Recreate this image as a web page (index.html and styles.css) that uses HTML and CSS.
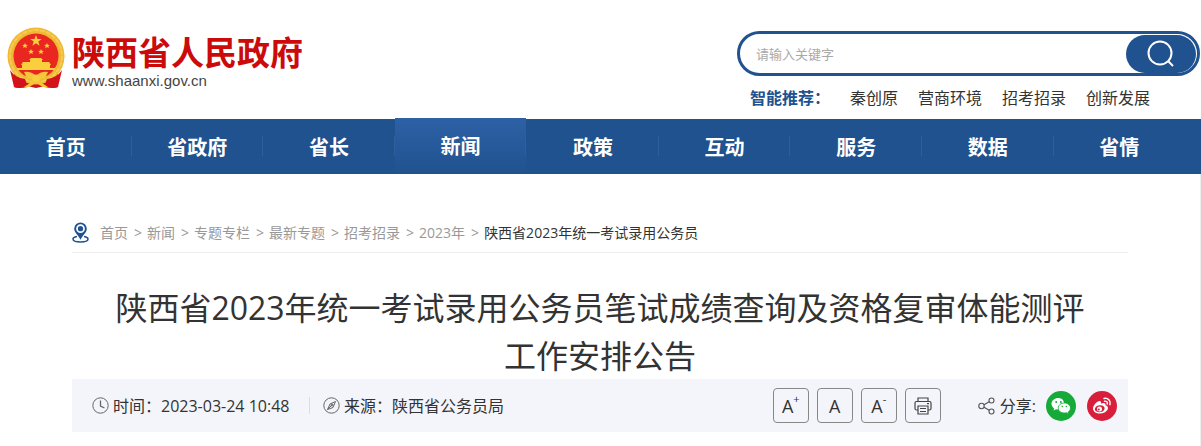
FILE: index.html
```html
<!DOCTYPE html>
<html lang="zh-CN">
<head>
    <meta charset="UTF-8">
    <meta name="viewport" content="width=device-width, initial-scale=1.0">
    <title>陕西省人民政府</title>
    <link rel="stylesheet" href="styles.css">
</head>
<body>
    <header class="header">
        <a class="logo" href="#">
            <svg class="emblem" viewBox="0 0 58 62" aria-hidden="true">
                <path d="M7 42 L7 60 Q15 62 20 59 L29 61 L38 59 Q44 62 51 60 L51 42z" fill="#d3121a"/>
                <circle cx="29" cy="29" r="28.500" fill="#efb935"/>
                <circle cx="29" cy="29" r="26" fill="none" stroke="#f6cb50" stroke-width="2" stroke-dasharray="5 1"/>
                <circle cx="29" cy="29" r="22.500" fill="#e92720"/>
                <path d="M29 8l1.500 4h4.200l-3.400 2.600 1.300 4.200-3.600-2.600-3.600 2.600 1.300-4.200-3.400-2.600h4.200z" fill="#f9cf3e"/>
                <g fill="#f9cf3e">
                    <path id="star" d="M18 16l.8 1.800 2 .1-1.500 1.300.5 2-1.800-1.100-1.800 1.100.5-2-1.500-1.300 2-.1z"/>
                    <use href="#star" x="22"/>
                    <use href="#star" x="6" y="6"/>
                    <use href="#star" x="16" y="6"/>
                </g>
                <path d="M22 33l2-2h10l2 2h-1v2h7l2 3h-1v3h5v2H10v-2h5v-3h-1l2-3h7v-2z" fill="#f9cf3e"/>
                <path d="M3 43 Q8 51 18 52 L21 60 Q10 62 7 60z M55 43 Q50 51 40 52 L37 60 Q48 62 51 60z" fill="#d3121a"/>
                <path d="M17 45 Q24 44 29 49 Q34 44 41 45 L38 51 L34 52 L32 54 L41 60 H36 L29 56 L22 60 H17 L26 54 L24 52 L20 51z" fill="#f5c63a"/>
                <circle cx="29" cy="51" r="3.500" fill="#f9cf3e"/>
            </svg>
            <span class="logo-text">
                <strong>陕西省人民政府</strong>
                <span>www.shaanxi.gov.cn</span>
            </span>
        </a>
        <div class="search">
            <form class="search-box">
                <input type="text" placeholder="请输入关键字" aria-label="请输入关键字">
                <button type="button" aria-label="搜索">
                    <svg width="28" height="28" viewBox="0 0 28 28" fill="none" stroke="#fff" stroke-width="2">
                        <circle cx="13" cy="13" r="11.500"/>
                        <path d="M21 21l5 5"/>
                    </svg>
                </button>
            </form>
            <div class="recommend">
                <strong>智能推荐：</strong>
                <a href="#">秦创原</a>
                <a href="#">营商环境</a>
                <a href="#">招考招录</a>
                <a href="#">创新发展</a>
            </div>
        </div>
    </header>

    <nav class="nav">
        <a href="#">首页</a>
        <a href="#">省政府</a>
        <a href="#">省长</a>
        <a href="#" class="active">新闻</a>
        <a href="#">政策</a>
        <a href="#">互动</a>
        <a href="#">服务</a>
        <a href="#">数据</a>
        <a href="#">省情</a>
    </nav>

    <main class="main">
        <div class="breadcrumb">
            <svg width="17" height="21" viewBox="0 0 17 21" aria-hidden="true">
                <path d="M5 14.500C2 15 1 16 1 17c0 2 3.500 3 7.500 3s7.500-1 7.500-3c0-1-1-2-4-2.500" fill="none" stroke="#20528f" stroke-width="1.500"/>
                <path d="M8.500 0.500a6.300 6.300 0 0 0-6.300 6.300c0 4 4.300 6.500 6.300 11 2-4.500 6.300-7 6.300-11a6.300 6.300 0 0 0-6.300-6.300z" fill="#20528f"/>
                <circle cx="8.500" cy="6.700" r="3.500" fill="none" stroke="#fff" stroke-width="1.700"/>
            </svg>
            <a href="#">首页</a><span>&gt;</span>
            <a href="#">新闻</a><span>&gt;</span>
            <a href="#">专题专栏</a><span>&gt;</span>
            <a href="#">最新专题</a><span>&gt;</span>
            <a href="#">招考招录</a><span>&gt;</span>
            <a href="#">2023年</a><span>&gt;</span>
            <a href="#" class="current">陕西省2023年统一考试录用公务员</a>
        </div>

        <h1>陕西省2023年统一考试录用公务员笔试成绩查询及资格复审体能测评工作安排公告</h1>

        <div class="info">
            <div class="info-item time">
                <svg width="17" height="17" viewBox="0 0 17 17" fill="none" stroke="#666">
                    <circle cx="8.500" cy="8.500" r="7.700"/>
                    <path d="M8.500 3.500v5.500l4 2" stroke-width="1.300"/>
                </svg>
                <span>时间：</span><time>2023-03-24 10:48</time>
            </div>
            <div class="info-item source">
                <svg width="17" height="17" viewBox="0 0 17 17" fill="none" stroke="#666">
                    <circle cx="8.500" cy="8.500" r="7.700"/>
                    <path d="M12.500 4.500l-2.500 6-5.500 2 2.500-5.500zM4.500 12.500l5-5"/>
                    <circle cx="9" cy="8" r="1"/>
                </svg>
                <span>来源：陕西省公务员局</span>
            </div>
            <div class="tools">
                <button type="button">A<sup>+</sup></button>
                <button type="button">A</button>
                <button type="button">A<sup>-</sup></button>
                <button type="button" aria-label="打印">
                    <svg width="18" height="18" viewBox="0 0 18 18" fill="none" stroke="#444" stroke-width="1.200">
                        <path d="M4 4.500V1h10v3.500M4 13H2.500Q1 13 1 11.500V6q0-1.500 1.500-1.500h13Q17 4.500 17 6v5.500q0 1.500-1.500 1.500H14M4 9h10v8H4zM6 11.500h6M6 14.500h6M13 6.700h2"/>
                    </svg>
                </button>
            </div>
            <div class="share">
                <svg width="17" height="18" viewBox="0 0 17 18" fill="none" stroke="#555" stroke-width="1.100">
                    <circle cx="3.500" cy="9" r="2.700"/>
                    <circle cx="13.500" cy="3.500" r="2.500"/>
                    <circle cx="13.500" cy="14.500" r="2.500"/>
                    <path d="M6 7.800l5.200-3M6 10.200l5.200 3"/>
                </svg>
                <span>分享:</span>
                <a href="#" class="wechat" aria-label="微信">
                    <svg width="20" height="18" viewBox="0 0 20 18">
                        <path d="M7.500 1C3.500 1 .5 3.500.5 6.800c0 1.900 1 3.500 2.700 4.600l-.7 2.200 2.600-1.300c1 .3 1.900.3 2.900.3C15 12.500 15 1 7.500 1z" fill="#fff"/>
                        <path d="M13.300 6C9.800 6 7.200 8.200 7.200 11s2.600 5 6.100 5c.8 0 1.500-.1 2.200-.3l2.200 1.200-.6-1.900c1.500-1 2.400-2.400 2.400-4 0-2.800-2.700-5-6.200-5z" fill="#fff" stroke="#16ab39" stroke-width=".8"/>
                        <g fill="#16ab39"><circle cx="5.200" cy="5" r="1"/><circle cx="9.800" cy="5" r="1"/><circle cx="11.300" cy="9.500" r=".8"/><circle cx="15.300" cy="9.500" r=".8"/></g>
                    </svg>
                </a>
                <a href="#" class="weibo" aria-label="微博">
                    <svg width="20" height="18" viewBox="0 0 20 18">
                        <path d="M1 11.500C1 8 6 3.200 8.300 4.200c1 .4.800 1.600.5 2.400 2.700-1.100 5.200-1 4.700 1.600 5.400 1.600 1.500 8.300-5.500 8.300-4 0-7-2-7-5z" fill="#fff"/>
                        <ellipse cx="7.800" cy="11.700" rx="4.900" ry="3.400" fill="#d81e3a" transform="rotate(-8 8 12)"/>
                        <circle cx="7.500" cy="12" r="2.500" fill="#fff"/>
                        <circle cx="6.800" cy="12.500" r="1" fill="#d81e3a"/>
                        <path d="M12 1.500c4-1 7 2.500 5.800 6.200M12.500 4.200c2-.4 3.300 1 2.700 2.900" fill="none" stroke="#fff" stroke-width="1.400" stroke-linecap="round"/>
                    </svg>
                </a>
            </div>
        </div>
    </main>
</body>
</html>
```
FILE: styles.css
```css
* {
    box-sizing: border-box;
}
body {
    margin: 0;
    background: #fff;
    color: #333;
    font-family: "Open Sans", "Noto Sans CJK SC", sans-serif;
    font-size: 16px;
    line-height: 24px;
}
a {
    color: inherit;
    text-decoration: none;
}
svg {
    display: block;
    flex: none;
}
button {
    padding: 0;
    font: inherit;
    color: inherit;
    cursor: pointer;
}

/* header */
.header {
    display: flex;
    justify-content: space-between;
    align-items: flex-start;
    padding: 27px 1px 8px 7px;
}
.logo {
    display: flex;
    gap: 7px;
}
.emblem {
    width: 58px;
    height: 62px;
}
.logo-text {
    display: flex;
    flex-direction: column;
    padding-top: 6px;
    color: #444;
    font-family: "Liberation Sans", Arial, sans-serif;
    font-size: 15px;
    line-height: 24px;
}
.logo-text strong {
    color: #cc0a0a;
    font-family: "Noto Sans CJK SC", sans-serif;
    font-size: 33px;
    font-weight: bold;
    line-height: 36px;
}
.search {
    width: 463px;
    padding-top: 4px;
}
.search-box {
    display: flex;
    height: 45px;
    border: 3px solid #20528f;
    border-radius: 23px;
}
.search-box input {
    flex: 1;
    min-width: 0;
    padding: 0 16px;
    border: 0;
    background: none;
    outline: none;
    font-family: inherit;
    font-size: 13px;
}
.search-box input::placeholder {
    color: #a9a9a9;
}
.search-box button {
    display: flex;
    align-items: center;
    justify-content: center;
    width: 70px;
    margin: 1px 1px 0 0;
    border: 0;
    border-radius: 20px;
    background: #20528f;
}
.recommend {
    display: flex;
    gap: 20px;
    padding: 10px 0 1px 13px;
}
.recommend strong {
    width: 80px;
    color: #20528f;
}

/* navigation */
.nav {
    display: flex;
    height: 55px;
    padding-right: 16px;
    background: #20528f;
}
.nav a {
    position: relative;
    flex: 1;
    color: #fff;
    font-size: 20px;
    font-weight: bold;
    line-height: 57px;
    text-align: center;
}
.nav a:not(:last-child)::after {
    content: "";
    position: absolute;
    top: 17px;
    right: 0;
    width: 1px;
    height: 20px;
    background: #2f5e98;
}
.nav .active {
    margin: -1px 1px 0 0;
    background: linear-gradient(#2d61a5, #20528f);
}

/* article */
.main {
    padding: 46px 72px 14px;
    border-right: 1px solid #eee;
}
.breadcrumb {
    display: flex;
    align-items: center;
    height: 33px;
    padding-bottom: 7px;
    border-bottom: 1px solid #eee;
    color: #999;
    font-size: 14px;
}
.breadcrumb svg {
    margin-right: 11px;
}
.breadcrumb span {
    margin: 0 5px 0 6px;
}
.breadcrumb .current {
    color: #333;
}
h1 {
    margin: 31px 0 -1px;
    padding: 0 32px;
    font-size: 32px;
    font-weight: normal;
    line-height: 48px;
    text-align: center;
}
.info {
    display: flex;
    align-items: center;
    height: 53px;
    padding: 0 11px 0 20px;
    background: #f4f5fb;
}
.info-item {
    display: flex;
    align-items: center;
    gap: 4px;
}
.time {
    width: 218px;
    height: 17px;
    border-right: 1px solid #ddd;
}
.time span {
    width: 44px;
    white-space: nowrap;
}
.source {
    padding-left: 13px;
}
.tools {
    display: flex;
    gap: 8px;
    margin-left: auto;
}
.tools button {
    display: flex;
    align-items: center;
    justify-content: center;
    width: 36px;
    height: 35px;
    border: 1px solid #888;
    border-radius: 4px;
    background: none;
    font-size: 18px;
}
.tools sup {
    align-self: flex-start;
    font-size: 11px;
    line-height: 20px;
}
.share {
    display: flex;
    align-items: center;
    margin-left: 37px;
}
.share span {
    margin: 0 10px 0 5px;
}
.wechat, .weibo {
    display: flex;
    align-items: center;
    justify-content: center;
    width: 30px;
    height: 30px;
    border-radius: 50%;
    background: #16ab39;
}
.weibo {
    margin-left: 11px;
    background: #d81e3a;
}
```
